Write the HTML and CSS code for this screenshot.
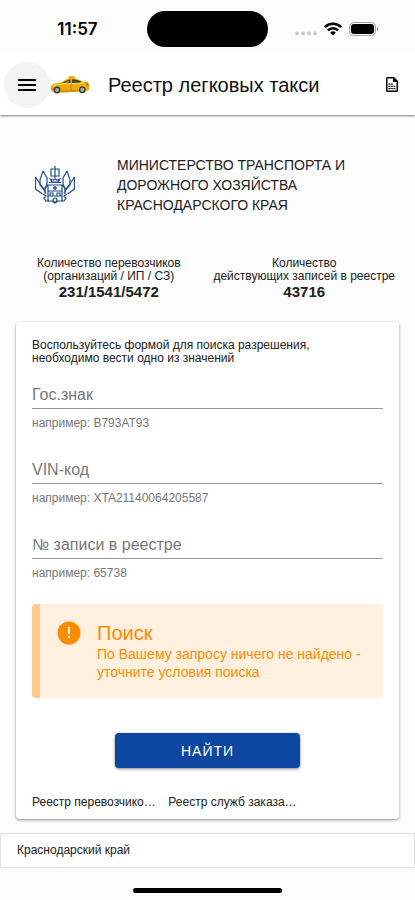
FILE: index.html
```html
<!DOCTYPE html>
<html lang="ru">
<head>
    <meta charset="UTF-8">
    <meta name="viewport" content="width=device-width, initial-scale=1.0">
    <title>Реестр легковых такси</title>
    <link rel="stylesheet" href="styles.css">
</head>
<body>

<div class="status-bar">
    <div class="clock">11:57</div>
    <div class="island"></div>
    <div class="status-icons">
        <svg width="22" height="5" viewBox="0 0 22 5" fill="#c8c8c8">
            <circle cx="2" cy="2.500" r="1.900"/><circle cx="8" cy="2.500" r="1.900"/><circle cx="14" cy="2.500" r="1.900"/><circle cx="20" cy="2.500" r="1.900"/>
        </svg>
        <svg width="18" height="14" viewBox="0 0 18 14" fill="none" stroke="#000" stroke-width="2.6">
            <path d="M.9 5.1a11.5 11.5 0 0 1 16.2 0"/>
            <path d="M3.9 8.4a7.2 7.2 0 0 1 10.2 0"/>
            <path d="M6.2 10.7a4 4 0 0 1 5.6 0L9 13.6z" fill="#000" stroke="none"/>
        </svg>
        <svg width="30" height="14" viewBox="0 0 30 14">
            <rect x=".5" y=".5" width="26" height="13" rx="4.2" fill="none" stroke="#a0a0a0"/>
            <rect x="2" y="2" width="23" height="10" rx="3"/>
            <path d="M28 5v4c1.600-.5 1.600-3.500 0-4z" fill="#999"/>
        </svg>
    </div>
</div>

<header class="app-bar">
    <button class="menu-button" type="button" aria-label="Меню">
        <svg width="18" height="12" viewBox="0 0 18 12"><path d="M0 0h18v2H0zM0 5h18v2H0zM0 10h18v2H0z"/></svg>
    </button>
    <svg class="taxi" width="40" height="18" viewBox="0 0 40 18">
        <path d="M18 2l.8-1.800q2.700-.4 5.700 0L25.500 2l.2 1.500H18z" fill="#eab308"/>
        <path d="M.8 12c0-2.500 1.500-4 4-4.500l6.700-1.200C14.500 3.800 17 2.500 21.500 2.500c5 0 8 .8 11.700 3.300l5.300.3-.3 1.400c.8 1.500 1.100 3.200 1 5.300l-.9 1.700-5.800 1-20.500 1.200L3 15.800c-1.600-.7-2.200-2-2.200-3.800z" fill="#eca90b"/>
        <path d="M12.500 7c2.300-2.100 4.700-3.300 8-3.600v3.700zM22 3.300c4 0 7 .8 9.300 2.700l-1.500 1L22 7.100z" fill="#48452f"/>
        <path d="M14.500 6.800l4.500-2.500-.5 2.500z" fill="#8b8b70"/>
        <path d="M4 9l9-1 21-.8" stroke="#ffda45" stroke-width="1.200" fill="none"/>
        <path d="M21 7.500v7M1.500 13h3M11 15.300l17-.6" stroke="#b46d08" stroke-width=".7" fill="none"/>
        <path d="M2.500 10l3.200-1.300-1 1.800z" fill="#fff3be"/>
        <path d="M36.600 7.300l1.800.2.200 2-2.200-.6z" fill="#b94912"/>
        <circle cx="7" cy="14" r="3.400" fill="#343434"/><circle cx="7" cy="14" r="2.100" fill="#aaa"/>
        <circle cx="32.300" cy="13.800" r="3.400" fill="#343434"/><circle cx="32.300" cy="13.800" r="2.100" fill="#aaa"/>
    </svg>
    <h1>Реестр легковых такси</h1>
    <button class="file-button" type="button" aria-label="Выписка">
        <svg width="12" height="15" viewBox="0 0 12 15">
            <path fill-rule="evenodd" d="M1.500 0H8l4 4v9.500q0 1.500-1.500 1.500h-9Q0 15 0 13.500v-12Q0 0 1.500 0zM1.500 1.500v12h9V5H7V1.500z"/>
            <path d="M2.500 6.500h2v1.300h-2zM5.200 6.500h1.600v1.300H5.200zM2.500 8.700h2V10h-2zM5.200 8.700h1.600V10H5.200zM7.500 8.700h1.800V10H7.500zM2.500 11h2v1.300h-2zM5.200 11h1.600v1.300H5.200zM7.500 11h1.800v1.300H7.500z"/>
        </svg>
    </button>
</header>

<main>
    <section class="ministry">
        <svg width="40" height="38" viewBox="0 0 40 38" fill="none" stroke="#234f8f" stroke-width="1.200">
            <path d="M20 0v12M16 3h8v7h-8z"/>
            <path d="M15 13l2 3h6l2-3-3 1-2-1-2 1zM14 16.500h12"/>
            <path d="M13 19h14v16h-4l-3 2-3-2h-4zM13 25h14M13 30h14"/>
            <path d="M20 20v4M18 22h4" stroke-width="1.400"/>
            <path d="M15 30v-3h3v3M22 30v-3h3v3"/>
            <circle cx="20" cy="34" r="2"/>
            <path d="M8 5L5 14v5l5 5M8 5l4 7v6l-2 5M32 5l3 9v5l-5 5M32 5l-4 7v6l2 5"/>
            <path d="M.5 11v12l7 5M.5 11L11 27M39.500 11v12l-7 5M39.500 11L29 27"/>
            <path d="M13 19l-3 3v6M27 19l3 3v6M8 28l3 2-2 2 2 3h3M32 28l-3 2 2 2-2 3h-3"/>
        </svg>
        <p>МИНИСТЕРСТВО ТРАНСПОРТА И ДОРОЖНОГО ХОЗЯЙСТВА КРАСНОДАРСКОГО КРАЯ</p>
    </section>

    <section class="stats">
        <div class="stat">
            Количество перевозчиков<br>(организаций / ИП / СЗ)
            <strong>231/1541/5472</strong>
        </div>
        <div class="stat">
            Количество<br>действующих записей в реестре
            <strong>43716</strong>
        </div>
    </section>

    <form class="card">
        <p class="intro">Воспользуйтесь формой для поиска разрешения, необходимо вести одно из значений</p>

        <div class="field">
            <label for="plate">Гос.знак</label>
            <input type="text" id="plate" aria-describedby="plateHint">
            <div class="hint" id="plateHint">например: В793АТ93</div>
        </div>
        <div class="field">
            <label for="vin">VIN-код</label>
            <input type="text" id="vin" aria-describedby="vinHint">
            <div class="hint" id="vinHint">например: XTA21140064205587</div>
        </div>
        <div class="field">
            <label for="record">№ записи в реестре</label>
            <input type="text" id="record" aria-describedby="recordHint">
            <div class="hint" id="recordHint">например: 65738</div>
        </div>

        <div class="alert" role="alert">
            <svg width="24" height="24" viewBox="0 0 24 24">
                <circle cx="12" cy="12" r="11.500" fill="#fb8c00"/>
                <path d="M11 6h2v7h-2zM11 15h2v2h-2z" fill="#fff"/>
            </svg>
            <div>
                <h2>Поиск</h2>
                <p>По Вашему запросу ничего не найдено - уточните условия поиска</p>
            </div>
        </div>

        <button class="search-button" type="button">НАЙТИ</button>

        <nav class="links">
            <a href="#carriers">Реестр перевозчиков такси</a>
            <a href="#services">Реестр служб заказа такси</a>
        </nav>
    </form>
</main>

<footer>Краснодарский край</footer>
<div class="home-indicator"></div>

</body>
</html>
```
FILE: styles.css
```css
* {
    box-sizing: border-box;
}
body {
    margin: 0;
    background: #fcfcfc;
    color: #202020;
    font-family: "Liberation Sans", Arial, sans-serif;
    font-size: 12px;
    line-height: 13px;
}
h1, h2, p {
    margin: 0;
    font-weight: 400;
}
svg {
    display: block;
    flex: none;
}
button {
    border: none;
    padding: 0;
    font-family: inherit;
    cursor: pointer;
}
.status-bar {
    display: grid;
    grid-template-columns: 1fr 121px 1fr;
    align-items: center;
    height: 54px;
    padding-top: 4px;
}
.clock {
    padding-left: 8px;
    color: #000;
    font-family: Inter, sans-serif;
    font-size: 17px;
    font-weight: 600;
    line-height: 20px;
    text-align: center;
}
.island {
    height: 36px;
    border-radius: 18px;
    background: #000;
}
.status-icons {
    display: flex;
    align-items: center;
    justify-content: flex-end;
    gap: 7px;
    padding-right: 36px;
}
.status-icons svg:first-child {
    margin-top: 8px;
}
.app-bar {
    display: flex;
    align-items: center;
    height: 61px;
    padding: 0 17px 0 4px;
    background: #fff;
    box-shadow: 0 1px 2px rgba(0, 0, 0, 0.5);
    clip-path: inset(0 0 -4px 0);
}
.menu-button {
    display: grid;
    place-items: center;
    flex: none;
    width: 46px;
    height: 46px;
    border-radius: 50%;
    background: #f3f3f3;
}
.app-bar h1 {
    flex: 1;
    margin-left: 18px;
    color: #111;
    font-size: 20px;
    line-height: 24px;
    white-space: nowrap;
}
.file-button {
    background: none;
}
main {
    padding: 40px 16px 0;
}
.ministry {
    display: flex;
    align-items: center;
    gap: 42px;
    padding: 0 32px 0 19px;
}
.ministry p {
    font-size: 14px;
    line-height: 20px;
}
.stats {
    display: flex;
    justify-content: space-between;
    margin: 42px 4px 22px 21px;
    text-align: center;
}
.stat strong {
    display: block;
    font-size: 15px;
    line-height: 17px;
}
.card {
    padding: 17px 16px 10px;
    border-radius: 4px;
    background: #fff;
    box-shadow: 0 1px 3px rgba(0, 0, 0, 0.45);
}
.intro {
    max-width: 300px;
    margin-bottom: 3px;
}
.field {
    display: grid;
    margin-bottom: 13px;
    color: #777;
}
.field label, .field input {
    grid-area: 1 / 1;
}
.field label {
    padding-top: 18px;
    font-size: 16px;
    line-height: 18px;
    pointer-events: none;
}
.field input {
    width: 100%;
    height: 41px;
    padding: 18px 0 4px;
    border: none;
    border-bottom: 1px solid #999;
    background: none;
    font-family: inherit;
    font-size: 16px;
    outline: none;
}
.field .hint {
    padding-top: 8px;
    line-height: 13px;
}
.alert {
    display: flex;
    gap: 16px;
    margin: 24px 0 35px;
    padding: 17px;
    border-left: 8px solid #ffca8c;
    border-radius: 4px;
    background: #fff0df;
    color: #fb8c00;
}
.alert h2 {
    font-size: 20px;
    line-height: 24px;
}
.alert p {
    font-size: 14px;
    line-height: 18px;
}
.search-button {
    display: block;
    width: 185px;
    height: 35px;
    margin: 0 auto;
    border-radius: 4px;
    background: #0d47a1;
    box-shadow: 0 1px 3px rgba(0, 0, 0, 0.5);
    color: #fff;
    font-size: 14px;
    letter-spacing: 1px;
}
.links {
    display: grid;
    grid-template-columns: 36% 37%;
    gap: 10px;
    margin-top: 28px;
}
.links a {
    overflow: hidden;
    color: inherit;
    text-decoration: none;
    text-overflow: ellipsis;
    white-space: nowrap;
}
footer {
    margin-top: 14px;
    padding: 10px 16px;
    border: 1px solid #e0e0e0;
    background: #fff;
}
.home-indicator {
    width: 36%;
    height: 5px;
    margin: 20px auto 7px;
    border-radius: 3px;
    background: #000;
}
```
